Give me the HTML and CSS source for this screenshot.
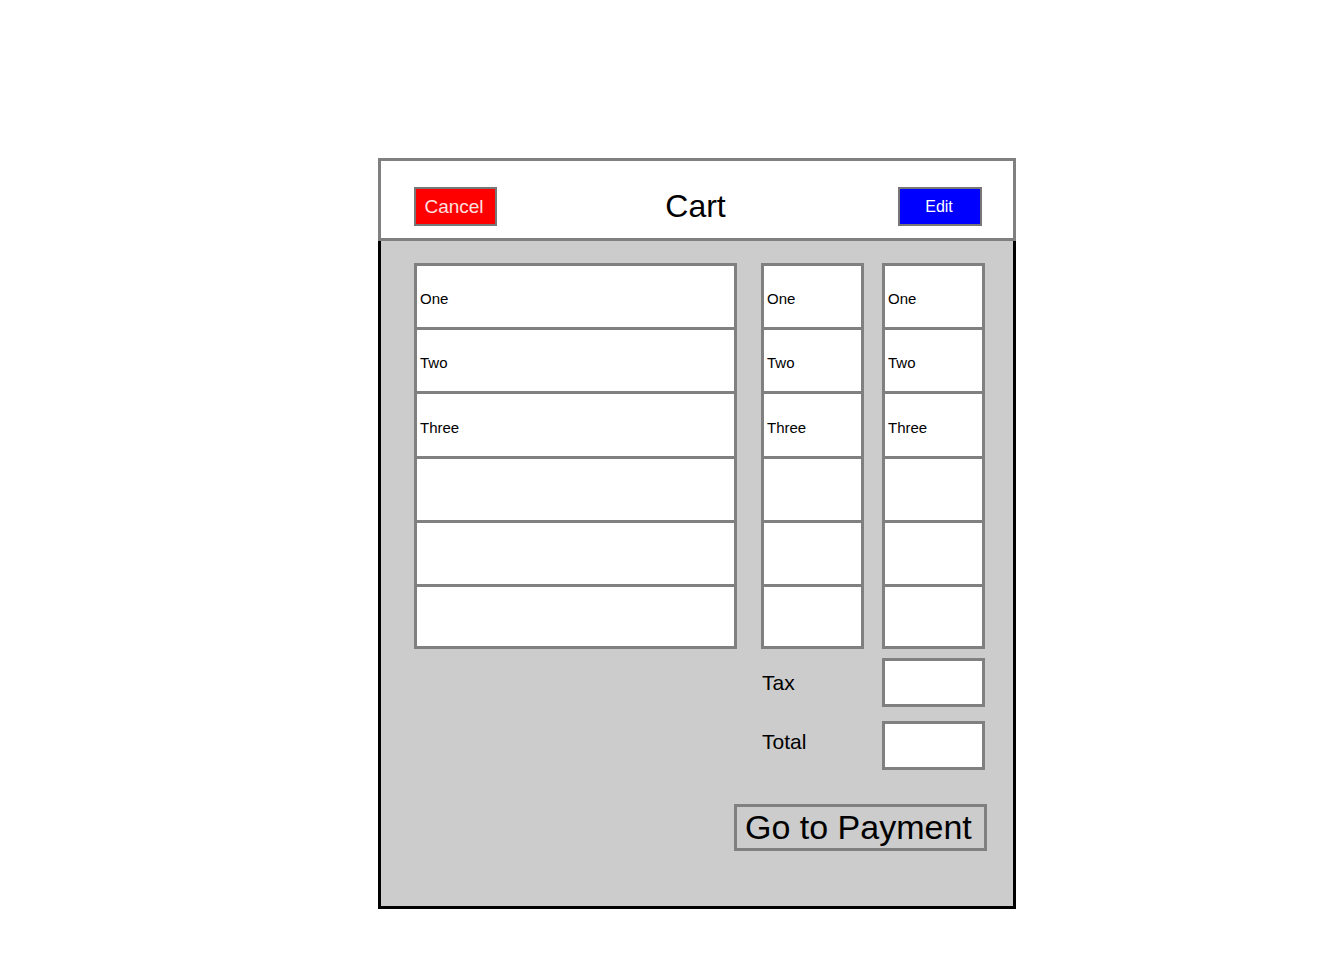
FILE: index.html
```html
<!doctype html>
<html>
<head>
<meta charset="utf-8">
<title>Cart</title>
<link rel="stylesheet" href="styles.css">
</head>

<body>
    <div class="cart">
        <div class="cart-head">
            <button class="btn btn-cancel">Cancel</button>
            <h1 class="cart-title">Cart</h1>
            <button class="btn btn-edit">Edit</button>
        </div>
        <div class="cart-body">
            <div class="cols">
                <ul class="col col-name">
                    <li>One</li>
                    <li>Two</li>
                    <li>Three</li>
                    <li></li>
                    <li></li>
                    <li></li>
                </ul>
                <ul class="col col-qty">
                    <li>One</li>
                    <li>Two</li>
                    <li>Three</li>
                    <li></li>
                    <li></li>
                    <li></li>
                </ul>
                <ul class="col col-price">
                    <li>One</li>
                    <li>Two</li>
                    <li>Three</li>
                    <li></li>
                    <li></li>
                    <li></li>
                </ul>
            </div>
            <div class="sum-row sum-tax">
                <span class="sum-label">Tax</span>
                <span class="sum-box"></span>
            </div>
            <div class="sum-row sum-total">
                <span class="sum-label">Total</span>
                <span class="sum-box"></span>
            </div>
            <button class="btn-pay">Go to Payment</button>
        </div>
    </div>
</body>
</html>
```

FILE: styles.css
```css
* {margin:0; padding:0; list-style:none; box-sizing:border-box;}
body {background:#fff; font-family:"Liberation Sans", Arial, sans-serif; color:#000;}

.cart {width:638px; margin:158px 0 0 378px;}

/* header */
.cart-head {display:flex; align-items:flex-start; height:83px; padding:26px 31px 0 33px; background:#fff; border:3px solid #808080;}
.cart-title {flex:1; text-align:center; font-weight:normal; font-size:32px; line-height:39px; padding-right:4px;}
.btn {height:39px; border:2px solid #777; font-family:inherit; color:#fff; cursor:pointer;}
.btn-cancel {width:83px; background:#f00; font-size:19px; color:#fde0e0; padding-right:3px;}
.btn-edit {width:84px; background:#00f; font-size:16px; padding-right:2px;}

/* body */
.cart-body {height:668px; padding:22px 28px 0 33px; background:#ccc; border:3px solid #000; border-top:0;}
.cols {display:flex;}
.col {background:#fff; border:3px solid #808080;}
.col li {height:64px; line-height:56px; padding:5px 0 0 3px; font-size:15px; border-bottom:3px solid #808080;}
.col li:nth-child(3) {height:65px; padding-top:6px;}
.col li:last-child {height:59px; border-bottom:0;}
.col-name {width:323px; margin-right:24px;}
.col-qty {width:103px; margin-right:18px;}
.col-price {width:103px;}

.sum-row {display:flex; align-items:center; margin-left:347px;}
.sum-tax {margin-top:9px;}
.sum-total {margin-top:14px;}
.sum-label {width:121px; padding-left:1px; font-size:21px;}
.sum-total .sum-label {padding-bottom:8px;}
.sum-box {width:103px; height:49px; background:#fff; border:3px solid #808080;}

.btn-pay {display:block; width:253px; height:47px; margin:34px 0 0 320px; padding:0 0 0 8px; text-align:left; background:#ccc; border:3px solid #808080; font-family:inherit; font-size:34px; line-height:41px; color:#000; cursor:pointer;}
```
